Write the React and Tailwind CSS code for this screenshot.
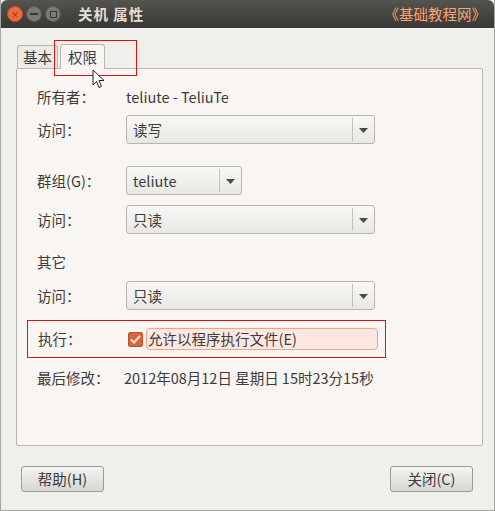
import React from "react";

const font = { fontFamily: '"Noto Sans CJK SC", "Noto Sans", sans-serif' };

const Arrow = () => (
  <svg width="9" height="5" viewBox="0 0 9 5">
    <path d="M0 0 H9 L4.5 5 Z" fill="#4a4a4a" />
  </svg>
);

const Combo = ({ value, wide = true }) => (
  <div
    className={`flex items-center h-[29px] border border-[#b8b4ae] rounded-[3px] bg-gradient-to-b from-[#f8f8f6] to-[#e7e7e3] ${
      wide ? "w-[249px]" : "w-[116px]"
    }`}
  >
    <span className="flex-1 pl-[6px] text-[#3c3c3c]">{value}</span>
    <div className="w-px h-[23px] bg-[#c4c0ba]" />
    <div className="w-[21px] flex justify-center pt-px">
      <Arrow />
    </div>
  </div>
);

const Row = ({ label, children, className = "" }) => (
  <div className={`flex items-center ${className}`}>
    <span className="w-[89px] text-[#3c3c3c]">{label}</span>
    {children}
  </div>
);

export default function App() {
  return (
    <div
      className="relative w-[495px] h-[511px] bg-[#efefec] text-[14.5px] flex flex-col border-x border-b border-[#a6a6a4] overflow-hidden"
      style={font}
    >
      {/* title bar */}
      <div className="h-[28px] shrink-0 flex items-center rounded-t-[6px] bg-gradient-to-b from-[#55544f] via-[#45443f] to-[#3a3935] px-[6px]">
        <div className="flex items-center gap-[3px]">
          <div className="w-[16px] h-[16px] rounded-full bg-[#ef6a3d] border border-[#c4512a] flex items-center justify-center text-[#7a2a10] text-[9px] leading-none">
            ×
          </div>
          <div className="w-[16px] h-[16px] rounded-full bg-[#7a7973] border border-[#5a5954] flex items-center justify-center">
            <div className="w-[8px] h-[2px] bg-[#3a3935]" />
          </div>
          <div className="w-[16px] h-[16px] rounded-full bg-[#7a7973] border border-[#5a5954] flex items-center justify-center">
            <div className="w-[7px] h-[7px] border border-[#3a3935]" />
          </div>
        </div>
        <span className="ml-[17px] font-bold text-[#e2ded6] tracking-[1px]">关机 属性</span>
        <span className="ml-auto mr-[2px] text-[#f7a57a] text-[14.5px]">《基础教程网》</span>
      </div>

      {/* tabs */}
      <div className="flex items-end ml-[16px] mt-[15px] h-[25px] relative z-10">
        <div className="h-[23px] px-[5px] flex items-center border border-[#b8b4b0] border-b-0 rounded-t-[3px] bg-[#eaeae6] text-[#3c3c3c]">
          基本
        </div>
        <div className="ml-[2px] h-[25px] -mb-px w-[45px] flex items-center justify-center border border-[#b8b4b0] border-b-0 rounded-t-[3px] bg-[#f9f5f2] text-[#3c3c3c]">
          权限
        </div>
      </div>

      {/* panel */}
      <div className="ml-[15px] mr-[11px] h-[378px] border border-[#b8b4b0] rounded-[2px] bg-[#f9f5f2] flex flex-col pl-[20px]">
        <Row label="所有者：" className="mt-[18px] h-[20px]">
          <span className="text-[#3c3c3c]">teliute - TeliuTe</span>
        </Row>
        <Row label="访问：" className="mt-[8px]">
          <Combo value="读写" />
        </Row>
        <Row label="群组(G)：" className="mt-[22px]">
          <Combo value="teliute" wide={false} />
        </Row>
        <Row label="访问：" className="mt-[10px]">
          <Combo value="只读" />
        </Row>
        <div className="mt-[18px] h-[20px] flex items-center text-[#3c3c3c]">其它</div>
        <Row label="访问：" className="mt-[9px]">
          <Combo value="只读" />
        </Row>
        <div className="mt-[10px] -ml-[10px] w-[359px] h-[38px] border border-[#e01010] flex items-center pl-[10px]">
          <span className="w-[90px] text-[#3c3c3c]">执行：</span>
          <div className="w-[15px] h-[15px] rounded-[2px] bg-[#d9653f] border border-[#b8502e] flex items-center justify-center">
            <svg width="11" height="9" viewBox="0 0 11 9">
              <path d="M1 4.5 L4 7.5 L10 1" stroke="#fbe3d8" strokeWidth="2" fill="none" />
            </svg>
          </div>
          <div className="ml-[3px] w-[232px] h-[22px] border border-[#f1a484] rounded-[4px] bg-[#fde7e3] flex items-center pl-[1px] text-[#3c3c3c]">
            允许以程序执行文件(E)
          </div>
        </div>
        <Row label="最后修改：" className="mt-[10px] h-[20px]">
          <span className="text-[#3c3c3c] -ml-[2px]">2012年08月12日 星期日 15时23分15秒</span>
        </Row>
      </div>

      {/* buttons */}
      <div className="flex justify-between ml-[20px] mr-[21px] mt-[20px]">
        <button className="w-[83px] h-[26px] border border-[#9e9a96] rounded-[3px] bg-gradient-to-b from-[#f4f4f2] to-[#d6d6d2] text-[#3c3c3c]">
          帮助(H)
        </button>
        <button className="w-[83px] h-[26px] border border-[#9e9a96] rounded-[3px] bg-gradient-to-b from-[#f4f4f2] to-[#d6d6d2] text-[#3c3c3c]">
          关闭(C)
        </button>
      </div>

      {/* annotation rectangle around tab */}
      <div className="absolute left-[53px] top-[40px] w-[83px] h-[36px] border border-[#e01010] z-20 pointer-events-none" />
      {/* mouse cursor */}
      <svg className="absolute left-[91px] top-[69px] z-30" width="13" height="20" viewBox="0 0 13 20">
        <path d="M1 1 L1 16 L4.5 12.5 L7 18.5 L9.5 17.5 L7 11.5 L12 11.5 Z" fill="#ffffff" stroke="#222222" strokeWidth="1" strokeLinejoin="round" />
      </svg>
    </div>
  );
}
